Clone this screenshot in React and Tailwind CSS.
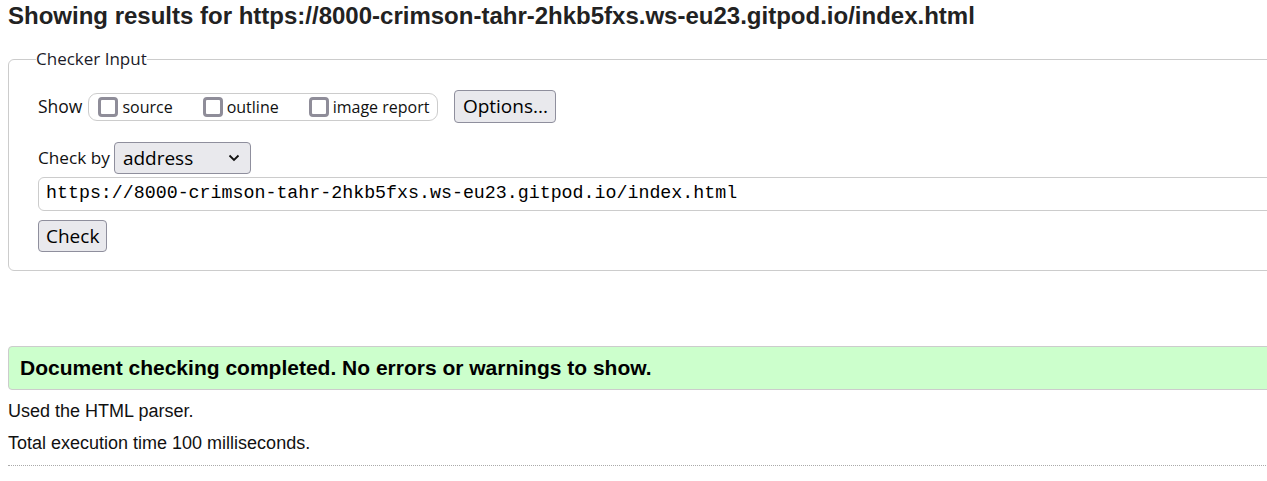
import React from 'react';

const ui = { fontFamily: '"Open Sans", "Noto Sans", sans-serif' };
const arial = { fontFamily: '"Liberation Sans", Arial, sans-serif' };
const mono = { fontFamily: '"Liberation Mono", "DejaVu Sans Mono", monospace' };

function Box({ label }) {
  return (
    <label className="flex items-center gap-[4px]">
      <span className="block w-[20px] h-[20px] border-[3px] border-[#8f8d99] rounded-[4px] bg-white" />
      <span className="text-[16px] leading-[22px] text-[#111]">{label}</span>
    </label>
  );
}

export default function App() {
  return (
    <div className="w-full h-[481px] overflow-hidden bg-white">
      <div className="w-[1320px] px-2 text-black">
        <h2 className="pt-[2px] text-[24px] leading-[28px] font-bold text-[#222]" style={arial}>
          Showing results for https://8000-crimson-tahr-2hkb5fxs.ws-eu23.gitpod.io/index.html
        </h2>

        {/* checker input form */}
        <fieldset
          className="mt-[18px] border border-[#ccc] rounded-[6px] pl-[29px] pr-4 pt-[20px] pb-[18px]"
          style={ui}
        >
          <legend className="ml-[-2px] text-[17px] leading-[22px] text-[#1c1c2a]">Checker Input</legend>

          <div className="flex items-center h-[33px]">
            <span className="text-[17.5px] text-[#111] mr-[6px]">Show</span>
            <div className="flex items-center gap-[30px] h-[28px] border border-[#ccc] rounded-[9px] pl-[9px] pr-[8px]">
              <Box label="source" />
              <Box label="outline" />
              <Box label="image report" />
            </div>
            <button className="ml-[16px] w-[102px] h-[33px] bg-[#e9e9ed] border border-[#8f8f9d] rounded-[4px] text-[19px] leading-none text-black">
              Options...
            </button>
          </div>

          <div className="flex items-center mt-[19px] h-[32px]">
            <span className="text-[17.2px] text-[#111] mr-[4px]">Check by</span>
            <div className="flex items-center justify-between w-[137px] h-[32px] pl-[8px] pr-[10px] bg-[#e9e9ed] border border-[#8f8f9d] rounded-[4px]">
              <span className="text-[19px] leading-none text-black">address</span>
              <svg width="12" height="8" viewBox="0 0 12 8" fill="none">
                <path d="M1.5 1.5 L6 6 L10.5 1.5" stroke="#111" strokeWidth="1.8" />
              </svg>
            </div>
          </div>

          <div
            className="mt-[3px] h-[34px] flex items-center pl-[7px] border border-[#ccc] rounded-[6px] text-[18.3px] text-black"
            style={mono}
          >
            https://8000-crimson-tahr-2hkb5fxs.ws-eu23.gitpod.io/index.html
          </div>

          <button className="mt-[9px] h-[32px] px-[7px] bg-[#e9e9ed] border border-[#8f8f9d] rounded-[4px] text-[19px] leading-none text-black">
            Check
          </button>
        </fieldset>

        {/* result summary */}
        <div
          className="mt-[75px] h-[44px] flex items-center pl-[11px] bg-[#ccffcc] border border-[#ccc] rounded-[4px]"
          style={arial}
        >
          <p className="text-[21px] font-bold text-black">
            Document checking completed. No errors or warnings to show.
          </p>
        </div>

        <div style={arial} className="text-[18px] text-[#111]">
          <p className="mt-[11px] leading-[20px]">Used the HTML parser.</p>
          <p className="mt-[12px] leading-[20px]">Total execution time 100 milliseconds.</p>
        </div>

        <hr className="mt-[12px] border-0 border-t border-dotted border-[#aaa]" />
      </div>
    </div>
  );
}
